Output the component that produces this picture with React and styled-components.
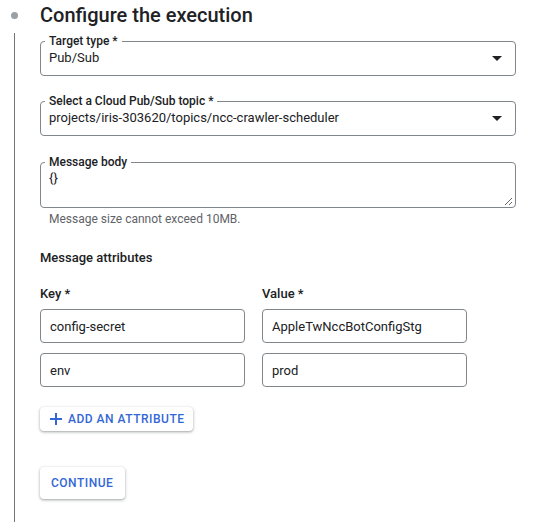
import styled, { createGlobalStyle } from "styled-components";

const GlobalStyle = createGlobalStyle`
  html, body {
    margin: 0;
    background: #fff;
  }
  body {
    font-family: Roboto, "Liberation Sans", Arial, sans-serif;
    color: #202124;
  }
`;

const attributes = [
  { key: "config-secret", value: "AppleTwNccBotConfigStg" },
  { key: "env", value: "prod" },
];

function CaretDown() {
  return (
    <svg width="10" height="5" viewBox="0 0 10 5">
      <path d="M0 0h10L5 5z" fill="#202124" />
    </svg>
  );
}

function PlusIcon() {
  return (
    <svg width="12" height="12" viewBox="0 0 12 12">
      <path d="M6 0v12M0 6h12" stroke="#3367d6" strokeWidth="2" />
    </svg>
  );
}

function App() {
  return (
    <>
      <GlobalStyle />
      <Step>
        <Header>
          <Rail>
            <Dot />
          </Rail>
          <Title>Configure the execution</Title>
        </Header>
        <Body>
          <Field>
            <Legend>Target type *</Legend>
            <SelectRow>
              <span>Pub/Sub</span>
              <CaretDown />
            </SelectRow>
          </Field>

          <Field $gap={18}>
            <Legend>Select a Cloud Pub/Sub topic *</Legend>
            <SelectRow>
              <span>projects/iris-303620/topics/ncc-crawler-scheduler</span>
              <CaretDown />
            </SelectRow>
          </Field>

          <Field $gap={19} $area>
            <Legend>Message body</Legend>
            <TextArea defaultValue="{}" />
          </Field>
          <Hint>Message size cannot exceed 10MB.</Hint>

          <SectionTitle>Message attributes</SectionTitle>

          <AttrGrid>
            <ColLabel>Key *</ColLabel>
            <ColLabel>Value *</ColLabel>
            {attributes.map((a) => [
              <TextInput key={a.key + "-k"} defaultValue={a.key} />,
              <TextInput key={a.key + "-v"} defaultValue={a.value} />,
            ])}
          </AttrGrid>

          <RaisedButton $small>
            <PlusIcon />
            Add an attribute
          </RaisedButton>

          <RaisedButton $top={36}>Continue</RaisedButton>
        </Body>
      </Step>
    </>
  );
}

export default App;

const Step = styled.div`
  width: 558px;
`;

const Header = styled.div`
  display: flex;
  align-items: center;
  height: 28px;
  padding-top: 1px;
`;

const Rail = styled.div`
  width: 29px;
  display: flex;
  justify-content: center;
`;

const Dot = styled.div`
  width: 7px;
  height: 7px;
  border-radius: 50%;
  background: #9aa0a6;
`;

const Title = styled.h2`
  margin: 0 0 0 11px;
  font-size: 20px;
  font-weight: 500;
  line-height: 28px;
  color: #202124;
`;

const Body = styled.div`
  margin: 4px 0 0 14px;
  border-left: 1px solid #757575;
  padding: 1px 0 23px 25px;
  display: flex;
  flex-direction: column;
  align-items: flex-start;
`;

const Field = styled.fieldset`
  box-sizing: border-box;
  width: 476px;
  margin: ${(p) => p.$gap || 0}px 0 0;
  padding: ${(p) => (p.$area ? "0 2px 1px 8px" : "0 13px 8px 8px")};
  border: 1px solid #80868b;
  border-radius: 4px;
  min-width: 0;
`;

const Legend = styled.legend`
  margin-left: -4px;
  padding: 0 4px;
  font-size: 12px;
  font-weight: 500;
  line-height: 14px;
  color: #202124;
`;

const SelectRow = styled.div`
  display: flex;
  align-items: center;
  justify-content: space-between;
  height: 18px;
  padding-top: 1px;
  font-size: 13px;
  line-height: 18px;
`;

const TextArea = styled.textarea`
  display: block;
  box-sizing: border-box;
  width: 100%;
  height: 37px;
  margin: 0;
  padding: 0;
  border: none;
  outline: none;
  resize: vertical;
  font-family: inherit;
  font-size: 13px;
  line-height: 18px;
  color: #202124;
  background: transparent;
`;

const Hint = styled.div`
  margin: 3px 0 0 9px;
  font-size: 12px;
  line-height: 16px;
  color: #5f6368;
`;

const SectionTitle = styled.div`
  margin-top: 22px;
  font-size: 13px;
  font-weight: 500;
  line-height: 18px;
`;

const AttrGrid = styled.div`
  margin-top: 18px;
  display: grid;
  grid-template-columns: 205px 205px;
  column-gap: 17px;
  row-gap: 10px;
`;

const ColLabel = styled.div`
  font-size: 13px;
  font-weight: 500;
  line-height: 18px;
  margin-bottom: -4px;
`;

const TextInput = styled.input`
  box-sizing: border-box;
  width: 205px;
  height: 34px;
  margin: 0;
  padding: 0 9px;
  border: 1px solid #80868b;
  border-radius: 4px;
  outline: none;
  font-family: inherit;
  font-size: 13px;
  color: #202124;
  background: #fff;
`;

const RaisedButton = styled.button`
  margin-top: ${(p) => p.$top || 20}px;
  display: inline-flex;
  align-items: center;
  gap: 6px;
  height: ${(p) => (p.$small ? 24 : 32)}px;
  padding: ${(p) => (p.$small ? "0 9px 0 10px" : "0 12px 0 11px")};
  border: none;
  border-radius: 4px;
  background: #fff;
  box-shadow: 0 1px 2px rgba(60, 64, 67, 0.3), 0 1px 3px 1px rgba(60, 64, 67, 0.15);
  font-family: inherit;
  font-size: 12px;
  font-weight: 500;
  letter-spacing: 0.5px;
  text-transform: uppercase;
  color: #3367d6;
  cursor: pointer;
`;
